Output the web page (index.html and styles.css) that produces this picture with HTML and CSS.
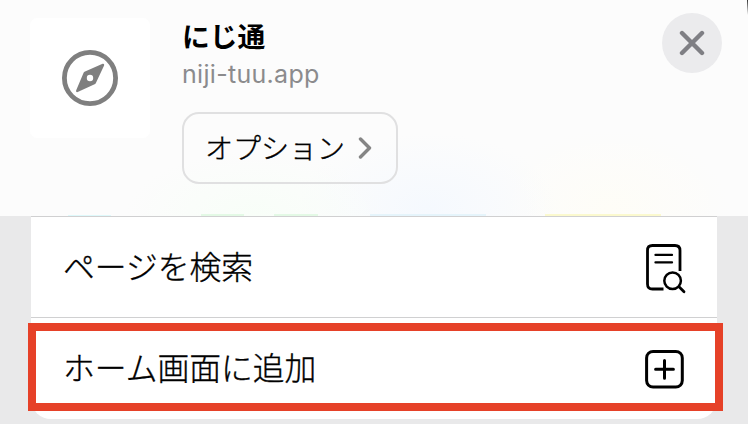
FILE: index.html
```
<!DOCTYPE html>
<html lang="ja">
<head>
<meta charset="utf-8">
<title>にじ通</title>
<link rel="stylesheet" href="styles.css">
</head>
<body>
<div class="sheet">
  <header class="header">
    <div class="thumb">
      <svg width="56" height="56" viewBox="0 0 56 56">
        <circle cx="28" cy="28" r="25.6" fill="none" stroke="#7f7f7f" stroke-width="4.8"/>
        <path fill="#7f7f7f" fill-rule="evenodd" d="M22.5 21.7 40.6 13.8Q42.7 13.4 42.1 15.5L34 32.8Q33.6 33.8 32.6 34.3L15.7 42.1Q13.7 42.6 14.1 40.4L21.5 23Q21.8 22.1 22.5 21.7ZM28 24.8a3.2 3.2 0 1 0 0 6.4 3.2 3.2 0 0 0 0-6.4Z"/>
      </svg>
    </div>
    <div class="info">
      <h1 class="title">にじ通</h1>
      <p class="url">niji-tuu.app</p>
      <button class="options"><span>オプション</span>
        <svg width="14" height="22" viewBox="0 0 14 22"><path d="M2.5 2 11.5 11 2.5 20" fill="none" stroke="#858585" stroke-width="3.4" stroke-linecap="round" stroke-linejoin="round"/></svg>
      </button>
    </div>
    <button class="close" aria-label="閉じる">
      <svg width="26" height="26" viewBox="0 0 26 26"><path d="M3 3 23 23M23 3 3 23" stroke="#7f7f84" stroke-width="4.4" stroke-linecap="round"/></svg>
    </button>
  </header>
  <main class="list">
    <div class="row row-find">
      <span>ページを検索</span>
      <svg width="42" height="52" viewBox="0 0 42 52" fill="none" stroke="#000" stroke-width="2.8" stroke-linecap="round" stroke-linejoin="round">
        <path stroke-linecap="butt" d="M19.5 47H8.5Q3.5 47 3.5 42V8.5Q3.5 3.5 8.5 3.5H31Q36 3.5 36 8.5V29"/>
        <path stroke-width="2.3" d="M11.5 12.9H28M11.5 20.4H28"/>
        <circle cx="28.6" cy="38.7" r="8.3" stroke-width="2.5"/>
        <path d="M35 44.8 40 49.7"/>
      </svg>
    </div>
    <div class="row row-add">
      <span>ホーム画面に追加</span>
      <svg width="42" height="42" viewBox="0 0 42 42" fill="none" stroke="#000" stroke-width="3" stroke-linecap="round">
        <rect x="2.6" y="3.4" width="35.7" height="35.7" rx="6.5"/>
        <path d="M20.5 12.4V30.2M11.6 21.3H29.4"/>
      </svg>
      <div class="highlight"></div>
    </div>
  </main>
</div>
</body>
</html>
```
FILE: styles.css
```
* { box-sizing: border-box; }
body { margin: 0; }
h1, p { margin: 0; font-weight: 400; }
svg { display: block; flex: none; }
button { font: inherit; border: 0; padding: 0; background: none; color: inherit; }

.sheet {
  width: 748px;
  height: 424px;
  overflow: hidden;
  background: #e9e9ea;
  color: #000;
  font-family: Inter, "Noto Sans CJK JP", sans-serif;
}
.header {
  display: flex;
  height: 216px;
  padding: 18px 26px 0 30px;
  background:
    linear-gradient(#333, #fcfcfc) 747px 0 / 1px 15px no-repeat,
    linear-gradient(#e3f9e5, #e3f9e5) 201px 100% / 43px 2px no-repeat,
    linear-gradient(#e3f9e5, #e3f9e5) 274px 100% / 44px 2px no-repeat,
    linear-gradient(#dff9fb, #dff9fb) 68px 100% / 43px 1px no-repeat,
    linear-gradient(#e5f4fb, #e5f4fb) 370px 100% / 116px 2px no-repeat,
    linear-gradient(#fbf9ce, #fbf9ce) 545px 100% / 116px 2px no-repeat,
    radial-gradient(ellipse 130px 65px at 255px 216px, #f8fef8, #fcfcfc00),
    radial-gradient(ellipse 130px 75px at 428px 208px, #f5f9fe, #fcfcfc00),
    radial-gradient(ellipse 120px 80px at 610px 210px, #fefdf7, #fcfcfc00),
    #fcfcfc;
}
.thumb {
  display: flex;
  align-items: center;
  justify-content: center;
  width: 120px;
  height: 120px;
  border-radius: 7px;
  background: #fff;
}
.info { margin-left: 32px; }
.title {
  height: 40px;
  font-size: 27.8px;
  line-height: 38px;
  font-weight: 700;
}
.url {
  height: 54px;
  color: #8b8b8d;
  font-size: 25px;
  line-height: 33px;
  letter-spacing: 0.3px;
}
.options {
  display: flex;
  align-items: center;
  justify-content: space-between;
  width: 216px;
  height: 72px;
  padding: 0 24px 0 21px;
  border: 2px solid #e0e0e1;
  border-radius: 17px;
  font-size: 28px;
}
.options span,
.row span {
  font-weight: 300;
  -webkit-text-stroke: 0.35px #000;
}
.options span { padding-bottom: 2px; }
.close {
  display: flex;
  align-items: center;
  justify-content: center;
  width: 60px;
  height: 60px;
  margin: -5px 0 0 auto;
  border-radius: 50%;
  background: #ebebed;
}
.list {
  width: 686px;
  height: 203px;
  margin-left: 31px;
  border-top: 1px solid #d0d0d1;
  border-radius: 0 0 20px 20px;
  background: #fff;
}
.row {
  display: flex;
  align-items: center;
  justify-content: space-between;
  height: 101px;
  padding: 0 31px 0 32px;
  border-bottom: 1px solid #d0d0d1;
  font-size: 31.8px;
}
.row span { padding-bottom: 4px; }
.row-find svg { margin-top: 2px; }
.row-add {
  position: relative;
  border-bottom: 0;
}
.row-add span { padding-bottom: 6px; }
.highlight {
  position: absolute;
  top: 5px;
  left: -3px;
  width: 695px;
  height: 88px;
  border: 8px solid #e64128;
}
```
